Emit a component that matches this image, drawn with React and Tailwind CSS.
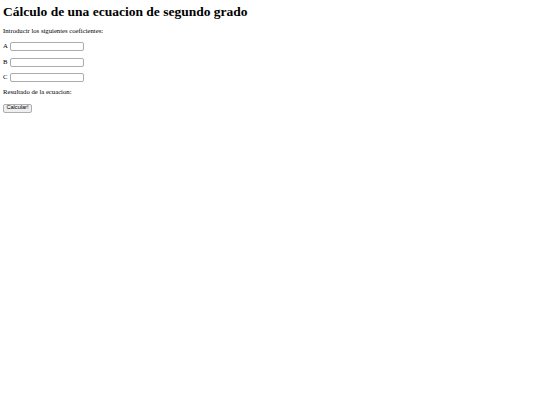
export default function App() {
  const fields = ["A", "B", "C"]
  return (
    <div className="w-[540px] h-[405px] bg-white text-black px-[3px] font-['Liberation_Serif',serif]">
      <div className="h-[24px] pt-[4px]">
        <h1 className="text-[13.5px] leading-[16px] font-bold">Cálculo de una ecuacion de segundo grado</h1>
      </div>
      <div className="h-[14px] flex items-center text-[6.7px]">Introducir los siguientes coeficientes:</div>
      <div className="flex flex-col">
        {fields.map((f, i) => (
          <div key={f} className={"h-[14px] flex items-center text-[6.7px] " + (i === 0 ? "mt-[1px]" : i === 1 ? "mt-[2px]" : "mt-[1px]")}>
            <span className="w-[7px]">{f}</span>
            <input className="w-[74px] h-[9px] border border-[#acacac] rounded-[2px] bg-white" />
          </div>
        ))}
      </div>
      <div className="h-[14px] mt-[1px] flex items-center text-[6.7px]">Resultado de la ecuacion:</div>
      <div className="h-[14px] mt-[2px] flex items-center">
        <button className="h-[9px] w-[29px] bg-[#efefef] border border-[#adadad] rounded-[2px] text-[5.6px] leading-none font-['Liberation_Sans',sans-serif]">
          Calcular!
        </button>
      </div>
    </div>
  )
}
